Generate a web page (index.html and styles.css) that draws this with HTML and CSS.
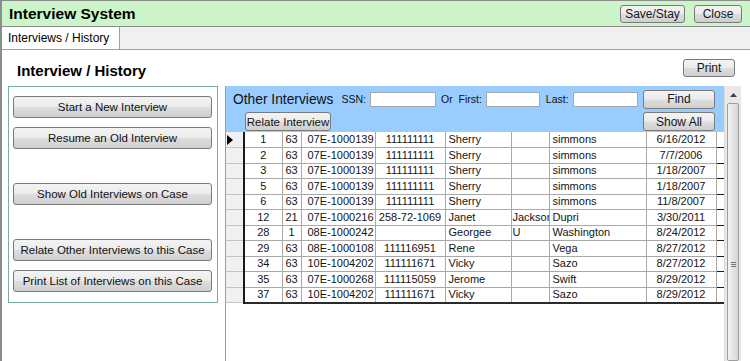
FILE: index.html
```html
<!DOCTYPE html>
<html lang="en">
  <head>
    <title>Interview System</title>
    <link rel="stylesheet" href="styles.css">
  </head>
  <body>
    <div class="window">

      <header class="titlebar">
        <h1>Interview System</h1>
        <div class="title-actions">
          <button class="btn btn-save">Save/Stay</button>
          <button class="btn btn-close">Close</button>
        </div>
      </header>

      <div class="tabs">
        <span class="tab">Interviews / History</span>
      </div>

      <div class="page-head">
        <h2>Interview / History</h2>
        <button class="btn btn-print">Print</button>
      </div>

      <div class="main">

        <div class="actions">
          <button class="btn btn-action">Start a New Interview</button>
          <button class="btn btn-action">Resume an Old Interview</button>
          <button class="btn btn-action spaced">Show Old Interviews on Case</button>
          <button class="btn btn-action spaced">Relate Other Interviews to this Case</button>
          <button class="btn btn-action">Print List of Interviews on this Case</button>
        </div>

        <div class="grid-panel">
          <div class="grid-body">
            <div class="search">
              <div class="search-row">
                <span class="search-title">Other Interviews</span>
                <span class="lbl lbl-ssn">SSN:</span>
                <input class="field field-ssn" type="text">
                <span class="lbl lbl-first">Or&nbsp; First:</span>
                <input class="field field-first" type="text">
                <span class="lbl lbl-last">Last:</span>
                <input class="field field-last" type="text">
                <button class="btn btn-find">Find</button>
              </div>
              <div class="search-row">
                <button class="btn btn-relate">Relate Interview</button>
                <button class="btn btn-find">Show All</button>
              </div>
            </div>

            <table class="rows">
              <colgroup>
                <col style="width:18px"><col style="width:38px"><col style="width:19px">
                <col style="width:74px"><col style="width:70px"><col style="width:66px">
                <col style="width:38px"><col style="width:97px"><col style="width:70px">
                <col style="width:8px">
              </colgroup>
              <tr>
                <td class="sel"><span class="pointer"></span></td>
                <td class="c">1</td><td class="c">63</td><td>07E-1000139</td><td class="c">111111111</td>
                <td>Sherry</td><td></td><td>simmons</td><td class="c">6/16/2012</td><td class="edge"></td>
              </tr>
              <tr>
                <td class="sel"></td>
                <td class="c">2</td><td class="c">63</td><td>07E-1000139</td><td class="c">111111111</td>
                <td>Sherry</td><td></td><td>simmons</td><td class="c">7/7/2006</td><td class="edge"></td>
              </tr>
              <tr>
                <td class="sel"></td>
                <td class="c">3</td><td class="c">63</td><td>07E-1000139</td><td class="c">111111111</td>
                <td>Sherry</td><td></td><td>simmons</td><td class="c">1/18/2007</td><td class="edge"></td>
              </tr>
              <tr>
                <td class="sel"></td>
                <td class="c">5</td><td class="c">63</td><td>07E-1000139</td><td class="c">111111111</td>
                <td>Sherry</td><td></td><td>simmons</td><td class="c">1/18/2007</td><td class="edge"></td>
              </tr>
              <tr>
                <td class="sel"></td>
                <td class="c">6</td><td class="c">63</td><td>07E-1000139</td><td class="c">111111111</td>
                <td>Sherry</td><td></td><td>simmons</td><td class="c">11/8/2007</td><td class="edge"></td>
              </tr>
              <tr>
                <td class="sel"></td>
                <td class="c">12</td><td class="c">21</td><td>07E-1000216</td><td class="c">258-72-1069</td>
                <td>Janet</td><td class="mid">Jackson</td><td>Dupri</td><td class="c">3/30/2011</td><td class="edge"></td>
              </tr>
              <tr>
                <td class="sel"></td>
                <td class="c">28</td><td class="c">1</td><td>08E-1000242</td><td class="c"></td>
                <td>Georgee</td><td class="mid">U</td><td>Washington</td><td class="c">8/24/2012</td><td class="edge"></td>
              </tr>
              <tr>
                <td class="sel"></td>
                <td class="c">29</td><td class="c">63</td><td>08E-1000108</td><td class="c">111116951</td>
                <td>Rene</td><td></td><td>Vega</td><td class="c">8/27/2012</td><td class="edge"></td>
              </tr>
              <tr>
                <td class="sel"></td>
                <td class="c">34</td><td class="c">63</td><td>10E-1004202</td><td class="c">111111671</td>
                <td>Vicky</td><td></td><td>Sazo</td><td class="c">8/27/2012</td><td class="edge"></td>
              </tr>
              <tr>
                <td class="sel"></td>
                <td class="c">35</td><td class="c">63</td><td>07E-1000268</td><td class="c">111115059</td>
                <td>Jerome</td><td></td><td>Swift</td><td class="c">8/29/2012</td><td class="edge"></td>
              </tr>
              <tr>
                <td class="sel"></td>
                <td class="c">37</td><td class="c">63</td><td>10E-1004202</td><td class="c">111111671</td>
                <td>Vicky</td><td></td><td>Sazo</td><td class="c">8/29/2012</td><td class="edge"></td>
              </tr>
            </table>
          </div>

          <div class="scrollbar">
            <div class="scroll-up">
              <svg width="7" height="4" viewBox="0 0 7 4"><polygon points="0,4 3.5,0 7,4" fill="#404040"/></svg>
            </div>
            <div class="scroll-thumb">
              <span class="grip"></span>
            </div>
          </div>
        </div>

      </div>
    </div>
  </body>
</html>
```

FILE: styles.css
```css
:root {
  --title-green: #ccf5c9;
  --frame-gray: #8c8c8c;
  --strip-gray: #f0f0f0;
  --panel-green: #78b098;
  --search-blue: #99ccff;
  --grid-line: #a9a9a9;
}

* {
  box-sizing: border-box;
}

body {
  margin: 0;
  font-family: "Liberation Sans", Arial, sans-serif;
  color: #000;
  background: #fff;
}

.window {
  height: 361px;
  border-left: 2px solid var(--frame-gray);
  overflow: hidden;
}

/* title bar */

.titlebar {
  height: 27px;
  display: flex;
  align-items: center;
  justify-content: space-between;
  padding: 0 8px 0 7px;
  background: var(--title-green);
  border-top: 1px solid var(--frame-gray);
  border-bottom: 1px solid var(--frame-gray);
}

.titlebar h1 {
  margin: 0;
  font-size: 15.5px;
  font-weight: bold;
}

.title-actions {
  display: flex;
  gap: 9px;
  padding-top: 1px;
}

/* buttons */

.btn {
  font-family: inherit;
  font-size: 12px;
  color: #151515;
  padding: 0;
  height: 18px;
  white-space: nowrap;
  border: 1px solid #7a7a7a;
  border-radius: 3px;
  background: linear-gradient(#f3f3f3, #ebebeb 48%, #dddddd 52%, #cfcfcf);
}

.btn-save {
  width: 65px;
}

.btn-close {
  width: 48px;
}

.btn-print {
  width: 52px;
  margin-top: 9px;
}

/* tabs */

.tabs {
  height: 23px;
  display: flex;
  background: var(--strip-gray);
  border-bottom: 1px solid #a0a0a0;
}

.tab {
  width: 118px;
  padding: 4px 0 0 6px;
  font-size: 12px;
  background: #fff;
  border-right: 1px solid #a0a0a0;
}

/* page heading */

.page-head {
  height: 36px;
  display: flex;
  align-items: flex-start;
  justify-content: space-between;
  padding: 0 15px;
}

.page-head h2 {
  margin: 12px 0 0;
  font-size: 15px;
  font-weight: bold;
  line-height: 18px;
}

/* main area */

.main {
  height: 275px;
  display: flex;
  align-items: flex-start;
  padding-left: 6px;
}

.actions {
  width: 210px;
  height: 217px;
  display: flex;
  flex-direction: column;
  gap: 9px;
  padding: 9px 5px 0 4px;
  border: 1px solid var(--panel-green);
}

.btn-action {
  height: 22px;
  font-size: 11.5px;
  color: #111;
  flex: none;
}

.btn-action.spaced {
  margin-top: 25px;
}

.grid-panel {
  height: 100%;
  display: flex;
  margin-left: 7px;
  border-left: 1px solid #9a9a9a;
}

.grid-body {
  width: 498px;
}

/* search header */

.search {
  height: 46px;
  padding-top: 3px;
  background: var(--search-blue);
}

.search-row {
  height: 20px;
  display: flex;
  align-items: center;
  padding-right: 9px;
}

.search-row + .search-row {
  height: 19px;
  margin-top: 3px;
  padding-left: 19px;
  justify-content: space-between;
}

.search-title {
  margin-left: 7px;
  font-size: 13.8px;
  color: #111;
}

.lbl {
  font-size: 10.5px;
  color: #111;
}

.lbl-ssn {
  margin-left: 8px;
}

.lbl-first {
  margin-left: 5px;
}

.lbl-last {
  margin-left: 6px;
}

.field {
  height: 15px;
  margin: 0 0 0 4px;
  padding: 0;
  border: 1px solid #a4a7ad;
  background: #fff;
}

.field-ssn {
  width: 66px;
}

.field-first {
  width: 54px;
}

.field-last {
  width: 65px;
}

.btn-find {
  width: 72px;
  height: 19px;
  margin-left: auto;
}

.btn-relate {
  width: 86px;
  height: 19px;
  font-size: 11.5px;
}

/* result rows */

.rows {
  width: 498px;
  table-layout: fixed;
  border-collapse: collapse;
  font-size: 11px;
  color: #141414;
}

.rows td {
  height: 15.5px;
  padding: 0 0 0 3px;
  line-height: 13px;
  white-space: nowrap;
  overflow: hidden;
  border-right: 1px solid var(--grid-line);
  border-bottom: 1px solid var(--grid-line);
}

.rows td:nth-child(4) {
  padding-left: 6px;
}

.rows td.c {
  padding: 0;
  text-align: center;
}

.rows td.mid {
  padding-left: 1px;
}

.rows td.sel {
  padding: 0 0 0 1px;
  background: #f0f0f0;
  border-right: 2px solid #1a1a1a;
  border-bottom: 1px solid #c4c4c4;
}

.pointer {
  display: block;
  width: 0;
  height: 0;
  border-top: 5px solid transparent;
  border-bottom: 5px solid transparent;
  border-left: 6px solid #000;
}

.rows td.edge {
  border-right: none;
  border-bottom: 1px solid #1a1a1a;
}

.rows tr:last-child td {
  border-bottom: 2px solid #2a2a2a;
}

.rows tr:last-child td.sel {
  border-bottom: 1px solid #c4c4c4;
}

/* scrollbar */

.scrollbar {
  width: 17px;
  height: 100%;
  display: flex;
  flex-direction: column;
  background: #e9e9e9;
  border-left: 1px solid #dcdcdc;
}

.scroll-up {
  height: 17px;
  display: flex;
  align-items: center;
  justify-content: center;
}

.scroll-thumb {
  flex: 1;
  margin: 0 2px 0 2px;
  display: flex;
  align-items: flex-start;
  justify-content: center;
  padding-top: 158px;
  border: 1px solid #9e9e9e;
  border-radius: 2px;
  background: linear-gradient(90deg, #f2f2f2, #e4e4e4 50%, #d6d6d6);
}

.grip {
  width: 5px;
  height: 5px;
  border-top: 1px solid #777;
  border-bottom: 1px solid #777;
  position: relative;
}

.grip::after {
  content: "";
  position: absolute;
  left: 0;
  right: 0;
  top: 1px;
  border-top: 1px solid #777;
}
```
